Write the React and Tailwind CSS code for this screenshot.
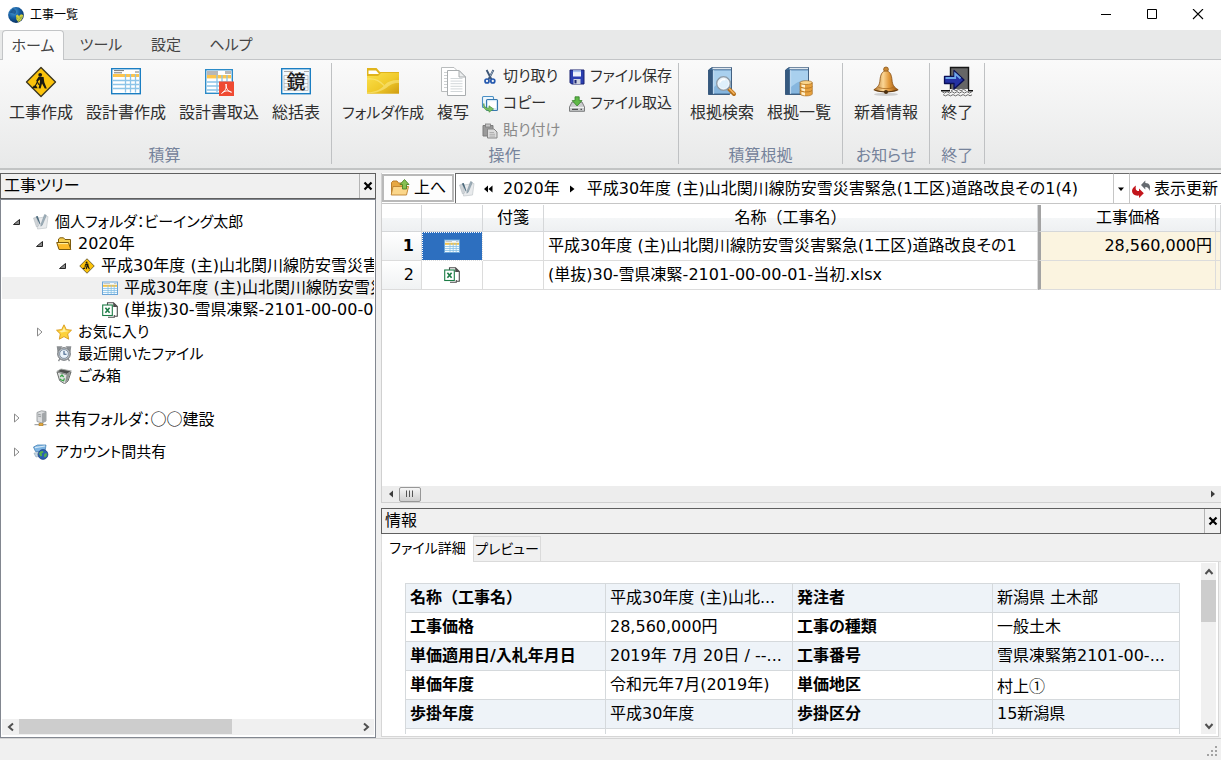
import React from "react";

const range = (n) => Array.from({ length: n }, (_, i) => i);

/* ---------- Icons ---------- */

function Svg({ size = 32, view = 32, children, className = "" }) {
  return (
    <svg
      width={size}
      height={size}
      viewBox={`0 0 ${view} ${view}`}
      fill="none"
      aria-hidden="true"
      className={`shrink-0 ${className}`}
    >
      {children}
    </svg>
  );
}

function GlobeLogo() {
  return (
    <Svg size={16} view={16}>
      <defs>
        <radialGradient id="logo" cx="0.35" cy="0.3" r="0.8">
          <stop offset="0" stopColor="#4a9fd8" />
          <stop offset="0.5" stopColor="#145a9e" />
          <stop offset="1" stopColor="#06264f" />
        </radialGradient>
      </defs>
      <circle cx="8" cy="8" r="7.9" fill="url(#logo)" />
      <path d="M5 1.5 C8 3 9 5 7 7 L1.5 5.5" fill="#0d3a74" opacity="0.6" />
      <path d="M8 8.5 L9.5 7.6 L11 9 L13 7.2 L15.2 8 C15.2 11 13 14 10.4 15 L8.4 12.5 Z" fill="#d6cf3c" />
      <path d="M8.5 10.5 L10.5 12 M11 9.5 L13.5 11.5 M10 14 L14.6 9" stroke="#7fa84a" strokeWidth="0.8" />
    </Svg>
  );
}

function WorkSign({ size = 32 }) {
  return (
    <Svg size={size}>
      <path d="M16 1.5 L30.5 16 L16 30.5 L1.5 16 Z" fill="#fcc30b" stroke="#3d3720" strokeWidth="1.4" strokeLinejoin="round" />
      <circle cx="15.2" cy="8.8" r="1.9" fill="#1c1a10" />
      <path d="M13.6 10.8 L18.6 11 L19.3 16.2 L21.8 22.4 L19.8 22.6 L17 17.6 L15.6 22.6 L13.6 22.2 L15 15.6 L14.8 13.6 L12.8 15.4 L14.4 18.6 L13.4 19 L11.2 14.6 Z" fill="#1c1a10" />
      <path d="M12.6 15.4 L10 20.4" stroke="#1c1a10" strokeWidth="1.1" />
      <path d="M6.6 22.2 L9 19.4 L11.6 20.2 L12.6 22.2 Z" fill="#1c1a10" />
    </Svg>
  );
}

function SheetIcon() {
  return (
    <Svg>
      <rect x="1.7" y="2.7" width="28.6" height="25" fill="#fff" stroke="#1b7ec2" strokeWidth="1.4" />
      <path d="M4 4.6 H14 M4 6.8 H12 M25 6 H29" stroke="#767676" strokeWidth="1" />
      <rect x="3" y="8" width="26" height="3" fill="#fdc54d" />
      <path d="M3 14.5 H29 M3 18.5 H29 M3 22.5 H29 M15.5 8 V26.5 M20.5 8 V26.5 M25.5 8 V26.5" stroke="#8cc4e8" strokeWidth="1.3" />
    </Svg>
  );
}

function SheetPdfIcon() {
  return (
    <Svg>
      <rect x="2.7" y="3.7" width="26.6" height="23.6" fill="#fff" stroke="#2b8bc8" strokeWidth="1.4" />
      <rect x="4" y="5" width="11" height="4" fill="#b7b7b7" />
      <rect x="22" y="5" width="6" height="3" fill="#b7b7b7" />
      <rect x="4" y="9" width="24" height="3.4" fill="#fdc54d" />
      <path d="M4 16 H28 M4 20 H28 M4 24 H28 M14 9 V26 M19 9 V26 M24 9 V26" stroke="#8cc4e8" strokeWidth="1.3" />
      <rect x="16" y="15.5" width="15" height="14.5" fill="#ef4a32" />
      <path d="M23 18 C22.2 21.5 25.5 26 28.5 26.2 C25.5 24.2 21 24.5 18.6 27.4 C21.6 26 24.4 21.5 23 18 Z" stroke="#fff" strokeWidth="1" strokeLinejoin="round" />
    </Svg>
  );
}

function MirrorIcon() {
  return (
    <Svg>
      <rect x="1.7" y="2.7" width="28.6" height="25" fill="#f4fafd" stroke="#1b7ec2" strokeWidth="1.4" />
      <path d="M4 5.5 H13 M24 5.5 H29" stroke="#a8a8a8" strokeWidth="1" />
      <path d="M4 9.5 H28 V24.5 H4 Z M4 13.5 H28 M4 17.5 H28 M4 21 H28" stroke="#b5b5b5" strokeWidth="0.8" />
      <text x="16" y="22.5" textAnchor="middle" fontSize="19" fontWeight="500" fill="#1a1a1a" fontFamily="'Noto Sans CJK JP', sans-serif">
        鏡
      </text>
    </Svg>
  );
}

function BigFolderIcon() {
  return (
    <Svg>
      <defs>
        <linearGradient id="folder" x1="0" y1="0" x2="1" y2="1">
          <stop offset="0" stopColor="#fbe14e" />
          <stop offset="0.55" stopColor="#f0ca2a" />
          <stop offset="1" stopColor="#cf9c12" />
        </linearGradient>
      </defs>
      <path d="M0 2 H9.5 L13 6 H32 V27.5 H0 Z" fill="#e0b41c" />
      <path d="M1.5 4.5 H9 L12 8 H1.5 Z" fill="#fff" />
      <path d="M0 10 H11 L14 7 H32 V27.5 H0 Z" fill="url(#folder)" />
      <path d="M0 26.5 C10 26 15 22 18 18.5 C21 15 27 13.5 32 14 V17 C26 17 23 19 20 21.5 C14 26 6 27.4 0 27.4 Z" fill="#fdf096" opacity="0.5" />
      <path d="M0 13 C9 12 13 15.5 17 19.5" stroke="#fdf096" strokeWidth="1.2" opacity="0.5" />
    </Svg>
  );
}

function PagesIcon() {
  const lines = range(6);
  return (
    <Svg>
      <path d="M4.5 1.5 H17 L22 6.5 V25.5 H4.5 Z" fill="#fff" stroke="#b9bcbd" />
      {lines.map((i) => (
        <path key={i} d={`M7 ${6.5 + i * 3} H11`} stroke="#c8cccd" strokeWidth="0.9" />
      ))}
      <path d="M10.5 4.5 H22 L28.5 11 V29.5 H10.5 Z" fill="#fff" stroke="#a9adaf" />
      <path d="M22 4.5 V11 H28.5 Z" fill="#eceeef" stroke="#a9adaf" strokeLinejoin="round" />
      {lines.map((i) => (
        <path key={i} d={`M13.5 ${12.5 + i * 2.6} H25.5`} stroke="#cdd3d5" strokeWidth="0.9" />
      ))}
    </Svg>
  );
}

function Book() {
  return (
    <>
      <path d="M6 1.5 H25.5 V25 L23.5 28.5 H2.5 V4 Z" fill="#3f6c98" stroke="#2c4c70" strokeWidth="0.8" />
      <path d="M4.5 4.5 H25 V27.5 H4.5 Z" fill="#86b6de" />
      <path d="M8 4.5 H25 V15 C18 13 13 17 8 21 Z" fill="#a9d0ee" />
      <path d="M6.5 2.5 H25" stroke="#dfe7ee" strokeWidth="1.6" />
      <path d="M2.5 4 H6.8 V28.5 H2.5 Z" fill="#35597f" />
      <path d="M7.6 4 V28" stroke="#dfeefa" strokeWidth="0.7" />
    </>
  );
}

function BookSearchIcon() {
  return (
    <Svg>
      <Book />
      <path d="M22.6 22.6 L28 28" stroke="#b4701c" strokeWidth="4" strokeLinecap="round" />
      <path d="M23.4 22.8 L28 27.4" stroke="#f3b25c" strokeWidth="1.6" strokeLinecap="round" />
      <circle cx="17.5" cy="17.5" r="6.6" fill="#dff0fb" stroke="#8e9daa" strokeWidth="1.8" />
      <circle cx="17.5" cy="17.5" r="5.6" stroke="#fff" strokeWidth="0.9" />
      <path d="M13.8 16.6 C14.6 14 17.4 13 19.4 13.8" stroke="#fff" strokeWidth="1.5" />
    </Svg>
  );
}

function BookDataIcon() {
  return (
    <Svg>
      <Book />
      {[24.5, 20.5, 16.8].map((y) => (
        <g key={y}>
          <path d={`M17 ${y} V${y + 3.6} C18 ${y + 6} 28.5 ${y + 6} 29.3 ${y + 3.6} V${y} Z`} fill="#e8a23f" stroke="#9b5f14" strokeWidth="0.6" />
          <path d={`M18.5 ${y + 1.4} V${y + 4} L22 ${y + 4.9} V${y + 2} Z`} fill="#fff0cb" />
        </g>
      ))}
      <ellipse cx="23.1" cy="16.6" rx="6.1" ry="1.9" fill="#fbd58b" stroke="#9b5f14" strokeWidth="0.6" />
    </Svg>
  );
}

function BellIcon() {
  return (
    <Svg>
      <defs>
        <linearGradient id="bell" x1="0" x2="1">
          <stop offset="0" stopColor="#a8661c" />
          <stop offset="0.38" stopColor="#fbd695" />
          <stop offset="0.62" stopColor="#e39a3c" />
          <stop offset="1" stopColor="#8f4d0e" />
        </linearGradient>
      </defs>
      <ellipse cx="16" cy="28.4" rx="12" ry="1.6" fill="#cfcfcf" />
      <circle cx="16" cy="3.4" r="2.4" fill="#c98936" stroke="#8d5514" strokeWidth="0.8" />
      <path d="M16 5 C20.4 5 21.6 9.5 22 14 C22.4 19 24 21 28.2 23.8 C24 26.6 8 26.6 3.8 23.8 C8 21 9.6 19 10 14 C10.4 9.5 11.6 5 16 5 Z" fill="url(#bell)" stroke="#8a5214" strokeWidth="0.8" />
      <path d="M4 23.6 C9 26 23 26 28 23.6 C25 27.2 7 27.2 4 23.6 Z" fill="#4b2d0c" />
      <circle cx="16" cy="26" r="2" fill="#4b2d0c" />
      <path d="M8.5 21.5 C13 23 19 23 23.6 21.5" stroke="#a86a20" strokeWidth="0.8" />
    </Svg>
  );
}

function ExitIcon() {
  return (
    <Svg>
      <path d="M9.5 1.5 H27.5 V24 H9.5 Z" fill="#666" stroke="#161616" strokeWidth="1.4" />
      <path d="M0 24.8 H9 M27 24.8 H32" stroke="#111" strokeWidth="1.4" />
      <path d="M9 23 H27 V26 H9 Z" fill="#f3f3f3" />
      <path d="M1 25.6 Q3.5 28.6 6 25.6 Q8.5 28.6 11 25.6 Q13.5 28.6 16 25.6 Q18.5 28.6 21 25.6 Q23.5 28.6 26 25.6 Q28.5 28.6 31 25.6 M2 28.6 Q4.5 31.2 7 28.6 Q9.5 31.2 12 28.6 Q14.5 31.2 17 28.6 Q19.5 31.2 22 28.6 Q24.5 31.2 27 28.6 Q29 31 31 28.8 M10 24.6 Q12.5 22.4 15 24.6 Q17.5 22.4 20 24.6 Q22.5 22.4 25 24.6" stroke="#5c5c5c" strokeWidth="0.9" />
      <path d="M3.5 10.5 H13 V4.5 L23 14 L13 23 V17.5 H3.5 Z" fill="#2431a4" stroke="#0a0f55" strokeWidth="1.3" strokeLinejoin="round" />
      <path d="M4.5 12 H14.2 V7.5 L19.5 12.5" stroke="#6fa8ea" strokeWidth="1.8" />
    </Svg>
  );
}

function ScissorsIcon() {
  return (
    <Svg size={16} view={16}>
      <path d="M4.6 1 L9.4 10.2 M11.4 1 L6.6 10.2" stroke="#3d5676" strokeWidth="1.9" />
      <path d="M11 1.6 L8 7.4" stroke="#a9bacb" strokeWidth="0.8" />
      <circle cx="5" cy="12" r="2" stroke="#2458ae" strokeWidth="1.7" />
      <circle cx="10.8" cy="12" r="2" stroke="#2458ae" strokeWidth="1.7" />
    </Svg>
  );
}

function CopyIcon() {
  return (
    <Svg size={18} view={18}>
      <rect x="1.5" y="1.5" width="11" height="11" rx="1" fill="#eef7fd" stroke="#4a8fc4" strokeWidth="1.1" />
      <rect x="5.5" y="4.5" width="11" height="11" rx="1" fill="#d7ebf9" stroke="#3678ae" strokeWidth="1.1" />
      <rect x="7" y="6.2" width="8" height="6.8" fill="#fff" />
      <path d="M2.8 8.5 C3 12 5 13.4 8 13.2 V10.8 L12.6 14 L8 17.2 V15.4 C4 15.6 2 13 2.8 8.5 Z" fill="#7cc163" stroke="#4b9340" strokeWidth="0.7" />
    </Svg>
  );
}

function PasteIcon() {
  return (
    <Svg size={16} view={16}>
      <path d="M1 2.5 H11 V13 H1 Z" fill="#9a9a9a" stroke="#7d7d7d" />
      <rect x="3.5" y="1" width="5" height="3" fill="#c9c9c9" stroke="#7d7d7d" strokeWidth="0.8" />
      <path d="M5.5 6 H12 L15 9 V15 H5.5 Z" fill="#dcdcdc" stroke="#868686" />
      <path d="M7.5 9.5 H12 M7.5 11.3 H13 M7.5 13.1 H13" stroke="#a3a3a3" strokeWidth="0.8" />
    </Svg>
  );
}

function SaveIcon() {
  return (
    <Svg size={16} view={16}>
      <path d="M1 1 H15 V15 H2.5 L1 13.5 Z" fill="#2a3fb0" stroke="#18206e" />
      <rect x="4" y="1.5" width="8" height="6" fill="#eef2fb" />
      <rect x="4" y="1.5" width="8" height="1.6" fill="#a9c3ee" />
      <rect x="4.5" y="10" width="7" height="5" fill="#cfd3de" />
      <rect x="5.5" y="11" width="2" height="3.4" fill="#1c2672" />
    </Svg>
  );
}

function ImportIcon() {
  return (
    <Svg size={16} view={16}>
      <path d="M3 6 H13 L15.5 11 V15.3 H0.5 V11 Z" fill="#c9cbcc" stroke="#6f7273" strokeWidth="0.9" />
      <path d="M1 11.4 H15" stroke="#f7f7f7" />
      <path d="M3 13.4 H9 M11.5 13.4 H13" stroke="#515354" strokeWidth="1.1" />
      <path d="M6 0.8 H10.2 V4.6 H13 L8.1 10 L3.2 4.6 H6 Z" fill="#5fb947" stroke="#33802a" strokeWidth="0.8" />
    </Svg>
  );
}

function PenNoteIcon() {
  return (
    <Svg size={16} view={16}>
      <path d="M5 4 L15 2.5 L13.5 14 L4.5 15 Z" fill="#e9ebed" stroke="#c3c8cc" strokeWidth="0.7" />
      <path d="M0.5 4 L4 3 L5.5 12 L3.5 13 Z" fill="#cfd4d8" stroke="#aeb5ba" strokeWidth="0.5" />
      <path d="M2.8 2.6 L6.8 10.4 L7.4 10 L4.8 2 Z" fill="#4c6a7c" />
      <path d="M11.6 0.5 L13.4 1.3 L9.2 11.2 L7.8 12.2 L8 10.2 Z" fill="#9fb0bb" stroke="#7a8c99" strokeWidth="0.5" />
    </Svg>
  );
}

function OpenFolderIcon() {
  return (
    <Svg size={16} view={16}>
      <path d="M2.5 12 V3 L4 1.8 H7.5 L9 3.5 H14.5 V12" fill="#f7cf50" stroke="#7c5b0d" />
      <path d="M0.7 6.5 H12.5 L14.8 13.5 H3 Z" fill="#fdbb2a" stroke="#7c5b0d" strokeLinejoin="round" />
      <path d="M2 7.6 H12" stroke="#fff0a6" />
    </Svg>
  );
}

function SmallSheetIcon() {
  return (
    <Svg size={16} view={16}>
      <rect x="0.5" y="2" width="15" height="12.5" fill="#f3fafe" stroke="#6ba5d8" />
      <path d="M1.5 3.5 H8 M12 3.5 H14.5" stroke="#c5c9cc" />
      <rect x="1" y="4.8" width="14" height="2" fill="#f4c24a" />
      <path d="M1 8.5 H15 M1 10.5 H15 M1 12.5 H15 M6 5 V14 M9.2 5 V14 M12.2 5 V14" stroke="#86c0e4" strokeWidth="0.8" />
    </Svg>
  );
}

function ExcelIcon() {
  return (
    <Svg size={16} view={16}>
      <path d="M5.5 3 V0.7 H11.5 L15.3 4.5 V14.3 H12.5" fill="#fff" stroke="#4c4c4c" strokeWidth="1.1" />
      <path d="M11.2 0.5 L15.6 5 H11.2 Z" fill="#4c4c4c" />
      <path d="M6 15.3 H12.3 V13" stroke="#4c4c4c" strokeWidth="1.1" />
      <rect x="0.7" y="3" width="9.6" height="10.5" fill="#fff" stroke="#1c7c46" strokeWidth="1.1" />
      <path d="M3.4 5.8 L7.6 10.8 M7.6 5.8 L3.4 10.8" stroke="#1c7c46" strokeWidth="1.6" />
    </Svg>
  );
}

function StarIcon() {
  return (
    <Svg size={16} view={16}>
      <path d="M8 0.8 L10.3 5.6 L15.5 6.2 L11.7 9.9 L12.7 15.2 L8 12.6 L3.3 15.2 L4.3 9.9 L0.5 6.2 L5.7 5.6 Z" fill="#fdd23a" stroke="#d99a1c" strokeWidth="0.9" strokeLinejoin="round" />
      <path d="M8 3 L9.4 6.6 L13 7 L5.5 8.5 L3.4 7 L6.5 6.5 Z" fill="#fff0a2" />
    </Svg>
  );
}

function ClockIcon() {
  return (
    <Svg size={16} view={16}>
      <path d="M1.5 1 H5 L2 4.5 Z M14.5 1 H11 L14 4.5 Z M2.5 15.2 L4 12.5 M13.5 15.2 L12 12.5" fill="#8b8f92" stroke="#8b8f92" strokeWidth="1.4" />
      <circle cx="8" cy="8" r="6.3" fill="#b9bec2" stroke="#6c7175" strokeWidth="1" />
      <circle cx="8" cy="8" r="4.4" fill="#eaf3fa" stroke="#75879a" strokeWidth="0.8" />
      <path d="M8 5 V8.3 H10.5" stroke="#3c5d85" strokeWidth="1.1" />
    </Svg>
  );
}

function TrashIcon() {
  return (
    <Svg size={16} view={16}>
      <path d="M1 4 L10.6 6.4 L15 4 L12 13 L8.6 15.8 L3.6 12.5 Z" fill="#dfe2e0" stroke="#5a5d5b" strokeWidth="0.9" strokeLinejoin="round" />
      <path d="M10.6 6.6 L14.4 4.8 L11.6 12.8 L9 15 Z" fill="#8f9391" />
      <path d="M0.8 3.4 L5 1 L15.4 3 L10.8 6.2 Z" fill="#4b4e4c" stroke="#a5a8a6" strokeWidth="0.9" />
      <path d="M4.2 8.8 L6 7 L7.6 9 M8.4 10.4 L7.6 12.8 L5.4 12.2 M4.4 10.8 L4.9 12.2" stroke="#38a045" strokeWidth="1.3" />
    </Svg>
  );
}

function ServerIcon() {
  return (
    <Svg size={16} view={16}>
      <path d="M4 2.5 L8.5 0.8 L13 1.5 V11 L9 13 L4 11.5 Z" fill="#d9dbdd" stroke="#8c9093" strokeWidth="0.8" />
      <path d="M9 3.5 L13 1.8 V11 L9 13 Z" fill="#a2a6a9" />
      <path d="M5 4.2 L8.2 5 M5 6 L8.2 6.8" stroke="#8c9093" strokeWidth="0.8" />
      <path d="M1.5 14.7 H13.5" stroke="#8c9093" strokeWidth="1" />
      <rect x="6" y="13.2" width="4" height="2.6" fill="#e5a93a" stroke="#a37420" strokeWidth="0.5" />
    </Svg>
  );
}

function SharedGlobeIcon() {
  return (
    <Svg size={16} view={16}>
      <path d="M0.5 3 L4.5 1 H13 L12 7.5 H2.5 Z" fill="#7db4e2" stroke="#4d86b8" strokeWidth="0.8" />
      <path d="M2 3.6 L12 2" stroke="#d6eaf8" strokeWidth="1.2" />
      <path d="M1 9.2 L4.5 8.4 L5.5 12.5 L3 13 Z" fill="#c4d6e4" stroke="#8aa3b6" strokeWidth="0.6" />
      <circle cx="10" cy="10.5" r="4.9" fill="#2a5eb4" stroke="#1a3c78" strokeWidth="0.7" />
      <path d="M7.2 7.6 C9 6.4 10.8 7 10.4 8.6 L8.6 9.6 L9.2 11.8 L7.6 12.4 L6 9.8 Z M12 9.2 L14 9.6 L13.4 12.4 L11.4 13.6 L11 11 Z" fill="#55b04c" />
    </Svg>
  );
}

function UpFolderIcon() {
  return (
    <Svg size={20} view={20}>
      <path d="M1.5 16 V4.5 L3 3 H7 L8.5 5 H15.5 V16 Z" fill="#e7a844" stroke="#b37523" strokeWidth="0.9" />
      <path d="M3 8.5 H18.5 L16.5 17 H1.2 Z" fill="#fbd68a" stroke="#bd8130" strokeWidth="0.9" strokeLinejoin="round" />
      <path d="M14.5 1.5 L19 6.5 H16.5 V11 H12.5 V6.5 H10 Z" fill="#86c053" stroke="#4c8527" strokeWidth="0.9" strokeLinejoin="round" />
    </Svg>
  );
}

function RefreshIcon() {
  return (
    <Svg size={20} view={20}>
      <path d="M10 6 L14.3 1.4 V4 C18.8 4 20 7.4 18.4 12 C18 9.2 16.8 8 14.3 8 V10.6 Z" fill="#666b70" />
      <path d="M12.8 14.2 L8 9.6 V12 C5.2 12 4 10.4 5 6.6 C1.2 8.6 -0.2 12.4 2.2 15 C3.8 16.6 5.6 16.8 8 16.6 V19 Z" fill="#c3161c" />
    </Svg>
  );
}

function XMark() {
  return (
    <Svg size={10} view={10}>
      <path d="M1.5 1.5 L8.5 8.5 M8.5 1.5 L1.5 8.5" stroke="#000" strokeWidth="2.2" />
    </Svg>
  );
}

const chevrons = {
  left: "M8 2.5 L4 6 L8 9.5",
  right: "M4 2.5 L8 6 L4 9.5",
  up: "M2.5 8 L6 4 L9.5 8",
  down: "M2.5 4 L6 8 L9.5 4",
};

function Chevron({ to }) {
  return (
    <Svg size={12} view={12}>
      <path d={chevrons[to]} stroke="#505050" strokeWidth="2" />
    </Svg>
  );
}

/* ---------- Title bar and ribbon ---------- */

function TitleBar() {
  return (
    <header className="flex h-[30px] shrink-0 items-center bg-white pl-2">
      <GlobeLogo />
      <h1 className="ml-[6px] flex-1 text-xs">工事一覧</h1>
      <button aria-label="最小化" className="flex h-full w-[46px] items-center justify-center">
        <Svg size={12} view={12}><path d="M1 5.5 H11" stroke="#000" /></Svg>
      </button>
      <button aria-label="最大化" className="flex h-full w-[46px] items-center justify-center">
        <Svg size={12} view={12}><path d="M1.5 0.5 H10.5 V9.5 H1.5 Z" stroke="#000" /></Svg>
      </button>
      <button aria-label="閉じる" className="flex h-full w-[46px] items-center justify-center">
        <Svg size={12} view={12}><path d="M1 0 L11 10 M11 0 L1 10" stroke="#000" strokeWidth="1.1" /></Svg>
      </button>
    </header>
  );
}

function RibbonTabs() {
  return (
    <nav className="flex h-[30px] shrink-0 border-b border-[#c3c5c7] bg-[#e8e9e9] pl-[2px] text-[15px] text-[#444]">
      <button className="-mb-px mr-1 w-[62px] rounded-t-sm border border-b-0 border-[#c3c5c7] bg-[#fbfbfb]">ホーム</button>
      <button className="w-[66px]">ツール</button>
      <button className="w-16">設定</button>
      <button className="w-[66px]">ヘルプ</button>
    </nav>
  );
}

function BigButton({ icon, label, text = "text-base" }) {
  return (
    <button className="flex flex-col items-center whitespace-nowrap">
      {icon}
      <span className={`mt-[3px] ${text} leading-6`}>{label}</span>
    </button>
  );
}

function SmallButton({ icon, label, disabled }) {
  return (
    <button disabled={disabled} className="flex h-[27px] items-center gap-[5px] text-[15px] whitespace-nowrap disabled:text-[#8a8a8a]">
      <span className="flex w-4 justify-center">{icon}</span>
      <span>{label}</span>
    </button>
  );
}

function RibbonGroup({ title, pad = "pl-[11px]", children }) {
  return (
    <section className={`mt-[3px] mb-1 flex flex-col justify-between border-r border-[#bfc1c3] pt-[3px] pr-[11px] ${pad}`}>
      <div className="flex items-start gap-[13px]">{children}</div>
      <h2 className="text-center leading-4 text-[#76839b]">{title}</h2>
    </section>
  );
}

function Ribbon() {
  return (
    <div className="flex h-[110px] shrink-0 border-b-2 border-[#c2c4c4] bg-linear-to-b from-[#fafafa] to-[#e8e9e9] text-base text-[#2f2f2f]">
      <RibbonGroup title="積算" pad="pl-[9px]">
        <BigButton icon={<WorkSign />} label="工事作成" />
        <BigButton icon={<SheetIcon />} label="設計書作成" />
        <BigButton icon={<SheetPdfIcon />} label="設計書取込" />
        <BigButton icon={<MirrorIcon />} label="総括表" />
      </RibbonGroup>
      <RibbonGroup title="操作" pad="pl-[10px]">
        <BigButton icon={<BigFolderIcon />} label="フォルダ作成" text="text-[15px]" />
        <BigButton icon={<PagesIcon />} label="複写" />
        <div className="-mt-[3px] w-[74px]">
          <SmallButton icon={<ScissorsIcon />} label="切り取り" />
          <SmallButton icon={<CopyIcon />} label="コピー" />
          <SmallButton icon={<PasteIcon />} label="貼り付け" disabled />
        </div>
        <div className="-mt-[3px] w-[98px]">
          <SmallButton icon={<SaveIcon />} label="ファイル保存" />
          <SmallButton icon={<ImportIcon />} label="ファイル取込" />
        </div>
      </RibbonGroup>
      <RibbonGroup title="積算根拠">
        <BigButton icon={<BookSearchIcon />} label="根拠検索" />
        <BigButton icon={<BookDataIcon />} label="根拠一覧" />
      </RibbonGroup>
      <RibbonGroup title="お知らせ">
        <BigButton icon={<BellIcon />} label="新着情報" />
      </RibbonGroup>
      <RibbonGroup title="終了">
        <BigButton icon={<ExitIcon />} label="終了" />
      </RibbonGroup>
    </div>
  );
}

/* ---------- Work tree ---------- */

function PanelHeader({ title }) {
  return (
    <div className="flex h-[26px] shrink-0 items-stretch border border-[#5f5f5f] bg-[#f0f0f0]">
      <h2 className="flex-1 pl-[3px] leading-6">{title}</h2>
      <button aria-label={`${title}を閉じる`} className="flex w-4 items-center justify-center border-l border-[#b4b4b4]">
        <XMark />
      </button>
    </div>
  );
}

const indents = ["pl-[10px]", "pl-[33px]", "pl-[56px]", "pl-[79px]"];
const symbolFont = "font-['Noto_Sans_CJK_JP',sans-serif]";

const tree = [
  { level: 0, state: "open", icon: <PenNoteIcon />, label: "個人フォルダ：ビーイング太郎", text: "text-[15px]" },
  { level: 1, state: "open", icon: <OpenFolderIcon />, label: "2020年" },
  { level: 2, state: "open", icon: <WorkSign size={16} />, label: "平成30年度 (主)山北関川線防安雪災害緊急(1工区)道路改良その1" },
  { level: 3, icon: <SmallSheetIcon />, label: "平成30年度 (主)山北関川線防安雪災害緊急(1工区)道路改良その1", selected: true },
  { level: 3, icon: <ExcelIcon />, label: "(単抜)30-雪県凍緊-2101-00-00-01-当初.xlsx" },
  { level: 1, state: "closed", icon: <StarIcon />, label: "お気に入り", text: "text-[15px]" },
  { level: 1, icon: <ClockIcon />, label: "最近開いたファイル", text: "text-[15px]" },
  { level: 1, icon: <TrashIcon />, label: "ごみ箱", text: "text-[15px]" },
  { level: 0, state: "closed", icon: <ServerIcon />, label: "共有フォルダ：○○建設", text: symbolFont, gap: "mt-5" },
  { level: 0, state: "closed", icon: <SharedGlobeIcon />, label: "アカウント間共有", text: "text-[15px]", gap: "mt-3" },
];

function TreeRow({ level, state, icon, label, selected, text = "", gap = "" }) {
  return (
    <li
      className={`flex h-[22px] items-center overflow-hidden whitespace-nowrap ${indents[level]} ${gap} ${selected ? "bg-[#f0f0f0]" : ""}`}
    >
      <span className="w-[21px] shrink-0">
        {state && (
          <button aria-label={state === "open" ? "折りたたむ" : "展開"} className="block">
            <Svg size={10} view={10}>
              {state === "open" ? (
                <path d="M7.5 2.5 V7.5 H1.5 Z" fill="#8a8a8a" stroke="#262626" />
              ) : (
                <path d="M2.5 1 L7 5 L2.5 9 Z" fill="#fff" stroke="#8a8a8a" />
              )}
            </Svg>
          </button>
        )}
      </span>
      {icon}
      <span className={`ml-[6px] leading-[22px] ${text}`}>{label}</span>
    </li>
  );
}

function TreePanel() {
  return (
    <aside className="flex w-[376px] shrink-0 flex-col">
      <PanelHeader title="工事ツリー" />
      <div className="flex min-h-0 flex-1 flex-col border border-[#828790] bg-white p-px">
        <ul className="flex-1 overflow-hidden pt-[10px]">
          {tree.map((row, i) => (
            <TreeRow key={i} {...row} />
          ))}
        </ul>
        <div className="mb-px flex h-4 bg-[#f0f0f0]">
          <button aria-label="左へスクロール" className="flex w-[17px] items-center justify-center"><Chevron to="left" /></button>
          <div className="flex-1">
            <div className="h-[15px] w-[63%] bg-[#cdcdcd]" />
          </div>
          <button aria-label="右へスクロール" className="flex w-[17px] items-center justify-center"><Chevron to="right" /></button>
        </div>
      </div>
    </aside>
  );
}

/* ---------- File list ---------- */

function AddressBar() {
  return (
    <div className="flex h-[31px] shrink-0 items-stretch border-b border-[#c6c6c6] bg-white whitespace-nowrap">
      <button className="my-px mr-px flex w-[72px] items-center gap-1 border-2 border-[#b9b9b9] bg-[#fdfdfd] pl-[6px]">
        <UpFolderIcon />
        <span>上へ</span>
      </button>
      <div className="flex min-w-0 flex-1 items-center border-t border-l border-[#6a6a6a] pl-[3px]">
        <PenNoteIcon />
        <button aria-label="前の階層" className="ml-2">
          <Svg size={10} view={10}><path d="M5 1.5 V8.5 L1 5 Z M9.5 1.5 V8.5 L5.5 5 Z" fill="#000" /></Svg>
        </button>
        <button className="ml-[10px]">2020年</button>
        <Svg size={10} view={10} className="ml-2"><path d="M2 1.5 V8.5 L6.5 5 Z" fill="#000" /></Svg>
        <button className="ml-[9px] truncate">平成30年度 (主)山北関川線防安雪災害緊急(1工区)道路改良その1(4)</button>
      </div>
      <button aria-label="履歴" className="flex w-[17px] items-center justify-center border-x border-t border-[#c6c6c6] border-t-[#6a6a6a]">
        <Svg size={8} view={8}><path d="M1 2.5 H7 L4 6 Z" fill="#000" /></Svg>
      </button>
      <button className="flex items-center gap-[3px] border-t border-[#6a6a6a] pr-[3px] pl-px">
        <RefreshIcon />
        <span>表示更新</span>
      </button>
    </div>
  );
}

const headCell = "h-[27px] border-r border-b border-[#d5d7d9] bg-linear-to-b from-white from-50% via-[#f4f6f7] via-51% to-[#eef0f2] p-0 font-normal";
const bodyCell = "h-[29px] border-r border-b border-[#dcdcdc] p-0";
const priceCell = "h-[29px] border-r border-b border-[#dcdcdc] bg-[#fbf4e0] p-0 pr-[3px] text-right";

function FileTable() {
  return (
    <table className="w-full table-fixed border-separate border-spacing-0 whitespace-nowrap">
      <colgroup>
        <col className="w-10" />
        <col className="w-[61px]" />
        <col className="w-[61px]" />
        <col />
        <col className="w-[178px]" />
        <col className="w-[5px]" />
      </colgroup>
      <thead>
        <tr>
          <th className={headCell} aria-label="番号" />
          <th className={headCell} aria-label="種類" />
          <th className={headCell}>付箋</th>
          <th className={`${headCell} [font-feature-settings:normal]`}>名称（工事名）</th>
          <th className={`${headCell} border-l-3 border-l-[#a3a3a3]`}>工事価格</th>
          <th className={headCell} aria-label="余白" />
        </tr>
      </thead>
      <tbody>
        <tr>
          <th className={`${bodyCell} bg-linear-to-b from-white to-[#f0f2f3] pr-[7px] text-right font-bold`}>1</th>
          <td className={`${bodyCell} bg-[#2d6fbf] outline-1 -outline-offset-1 outline-dotted outline-white`}>
            <div className="flex justify-center"><SmallSheetIcon /></div>
          </td>
          <td className={bodyCell} />
          <td className={`${bodyCell} truncate pl-1`}>平成30年度 (主)山北関川線防安雪災害緊急(1工区)道路改良その1</td>
          <td className={`${priceCell} border-l-3 border-l-[#a3a3a3]`}>28,560,000円</td>
          <td className={priceCell} />
        </tr>
        <tr>
          <th className={`${bodyCell} bg-linear-to-b from-white to-[#f0f2f3] pr-[7px] text-right font-normal`}>2</th>
          <td className={bodyCell}>
            <div className="flex justify-center"><ExcelIcon /></div>
          </td>
          <td className={bodyCell} />
          <td className={`${bodyCell} truncate pl-1`}>(単抜)30-雪県凍緊-2101-00-00-01-当初.xlsx</td>
          <td className={`${priceCell} border-l-3 border-l-[#a3a3a3]`} />
          <td className={priceCell} />
        </tr>
      </tbody>
    </table>
  );
}

function FileList() {
  return (
    <section className="flex min-h-0 flex-1 flex-col border-b border-l border-[#d0d0d0] bg-white">
      <AddressBar />
      <div className="min-h-0 flex-1 overflow-hidden pt-px">
        <FileTable />
      </div>
      <div className="flex h-4 shrink-0 items-center bg-[#ededed]">
        <button aria-label="左へスクロール" className="flex w-[17px] justify-center">
          <Svg size={8} view={8}><path d="M6 0.5 V7.5 L2 4 Z" fill="#3c3c3c" /></Svg>
        </button>
        <div className="flex flex-1">
          <div className="flex h-[15px] w-[22px] items-center justify-center rounded-xs border border-[#979797] bg-linear-to-b from-[#f6f6f6] to-[#cfcfcf]">
            <Svg size={10} view={10}><path d="M1.5 1.5 V8 M4.5 1.5 V8 M7.5 1.5 V8" stroke="#555" /></Svg>
          </div>
        </div>
        <button aria-label="右へスクロール" className="flex w-[17px] justify-center">
          <Svg size={8} view={8}><path d="M2 0.5 V7.5 L6 4 Z" fill="#3c3c3c" /></Svg>
        </button>
      </div>
    </section>
  );
}

/* ---------- Info panel ---------- */

const details = [
  ["名称（工事名）", "平成30年度 (主)山北...", "発注者", "新潟県 土木部"],
  ["工事価格", "28,560,000円", "工事の種類", "一般土木"],
  ["単価適用日/入札年月日", "2019年 7月 20日 / --...", "工事番号", "雪県凍緊第2101-00-..."],
  ["単価年度", "令和元年7月(2019年)", "単価地区", "村上①"],
  ["歩掛年度", "平成30年度", "歩掛区分", "15新潟県"],
  ["", "", "", ""],
];

const detailCell = "h-[29px] overflow-hidden whitespace-nowrap border border-[#d5d9dc] p-0 pl-1 text-left";

function InfoPanel() {
  return (
    <section className="mt-[5px] flex h-[230px] shrink-0 flex-col pb-px">
      <PanelHeader title="情報" />
      <div className="flex h-7 shrink-0 items-end border-l border-[#dcdcdc] text-sm whitespace-nowrap">
        <button className="h-7 w-[91px] bg-white">ファイル詳細</button>
        <button className="h-[26px] w-[68px] border border-[#dadada] bg-[#f0f0f0]">プレビュー</button>
        <div className="flex-1 border-b border-[#dadada]" />
      </div>
      <div className="mr-[2px] flex min-h-0 flex-1 overflow-hidden border-x border-b border-[#d6d6d6] bg-white pr-[2px] pb-[2px]">
        <div className="min-w-0 flex-1 overflow-hidden pt-[21px] pr-[21px] pl-[23px]">
          <table className="w-full table-fixed border-collapse">
            <colgroup>
              <col className="w-[200px]" />
              <col />
              <col className="w-[200px]" />
              <col />
            </colgroup>
            <tbody>
              {details.map(([k1, v1, k2, v2], i) => (
                <tr key={i} className={i % 2 ? "bg-white" : "bg-[#eef3f8]"}>
                  <th className={`${detailCell} font-bold [font-feature-settings:normal]`}>{k1}</th>
                  <td className={detailCell}>{v1}</td>
                  <th className={`${detailCell} font-bold`}>{k2}</th>
                  <td className={`${detailCell} ${v2.includes("①") ? symbolFont : ""}`}>{v2}</td>
                </tr>
              ))}
            </tbody>
          </table>
        </div>
        <div className="mt-px flex w-[15px] shrink-0 flex-col bg-[#f0f0f0]">
          <button aria-label="上へスクロール" className="flex h-[17px] items-center justify-center"><Chevron to="up" /></button>
          <div className="flex-1">
            <div className="h-[42px] bg-[#cdcdcd]" />
          </div>
          <button aria-label="下へスクロール" className="flex h-[17px] items-center justify-center"><Chevron to="down" /></button>
        </div>
      </div>
    </section>
  );
}

function StatusBar() {
  return (
    <footer className="flex h-[22px] shrink-0 items-end justify-end border-t border-[#d4d4d4] p-[2px]">
      <Svg size={12} view={12}>
        <path d="M8 0 h2 v2 h-2 z M8 4 h2 v2 h-2 z M4 4 h2 v2 h-2 z M8 8 h2 v2 h-2 z M4 8 h2 v2 h-2 z M0 8 h2 v2 h-2 z" fill="#a3a3a3" />
      </Svg>
    </footer>
  );
}

export default function App() {
  return (
    <div className="flex h-screen flex-col overflow-hidden bg-[#f0f0f0] font-['DejaVu_Sans','Noto_Sans_CJK_JP',sans-serif] text-base leading-6 text-black [font-feature-settings:'palt']">
      <TitleBar />
      <RibbonTabs />
      <Ribbon />
      <main className="flex min-h-0 flex-1 gap-[5px] pt-[3px]">
        <TreePanel />
        <div className="flex min-w-0 flex-1 flex-col">
          <FileList />
          <InfoPanel />
        </div>
      </main>
      <StatusBar />
    </div>
  );
}
